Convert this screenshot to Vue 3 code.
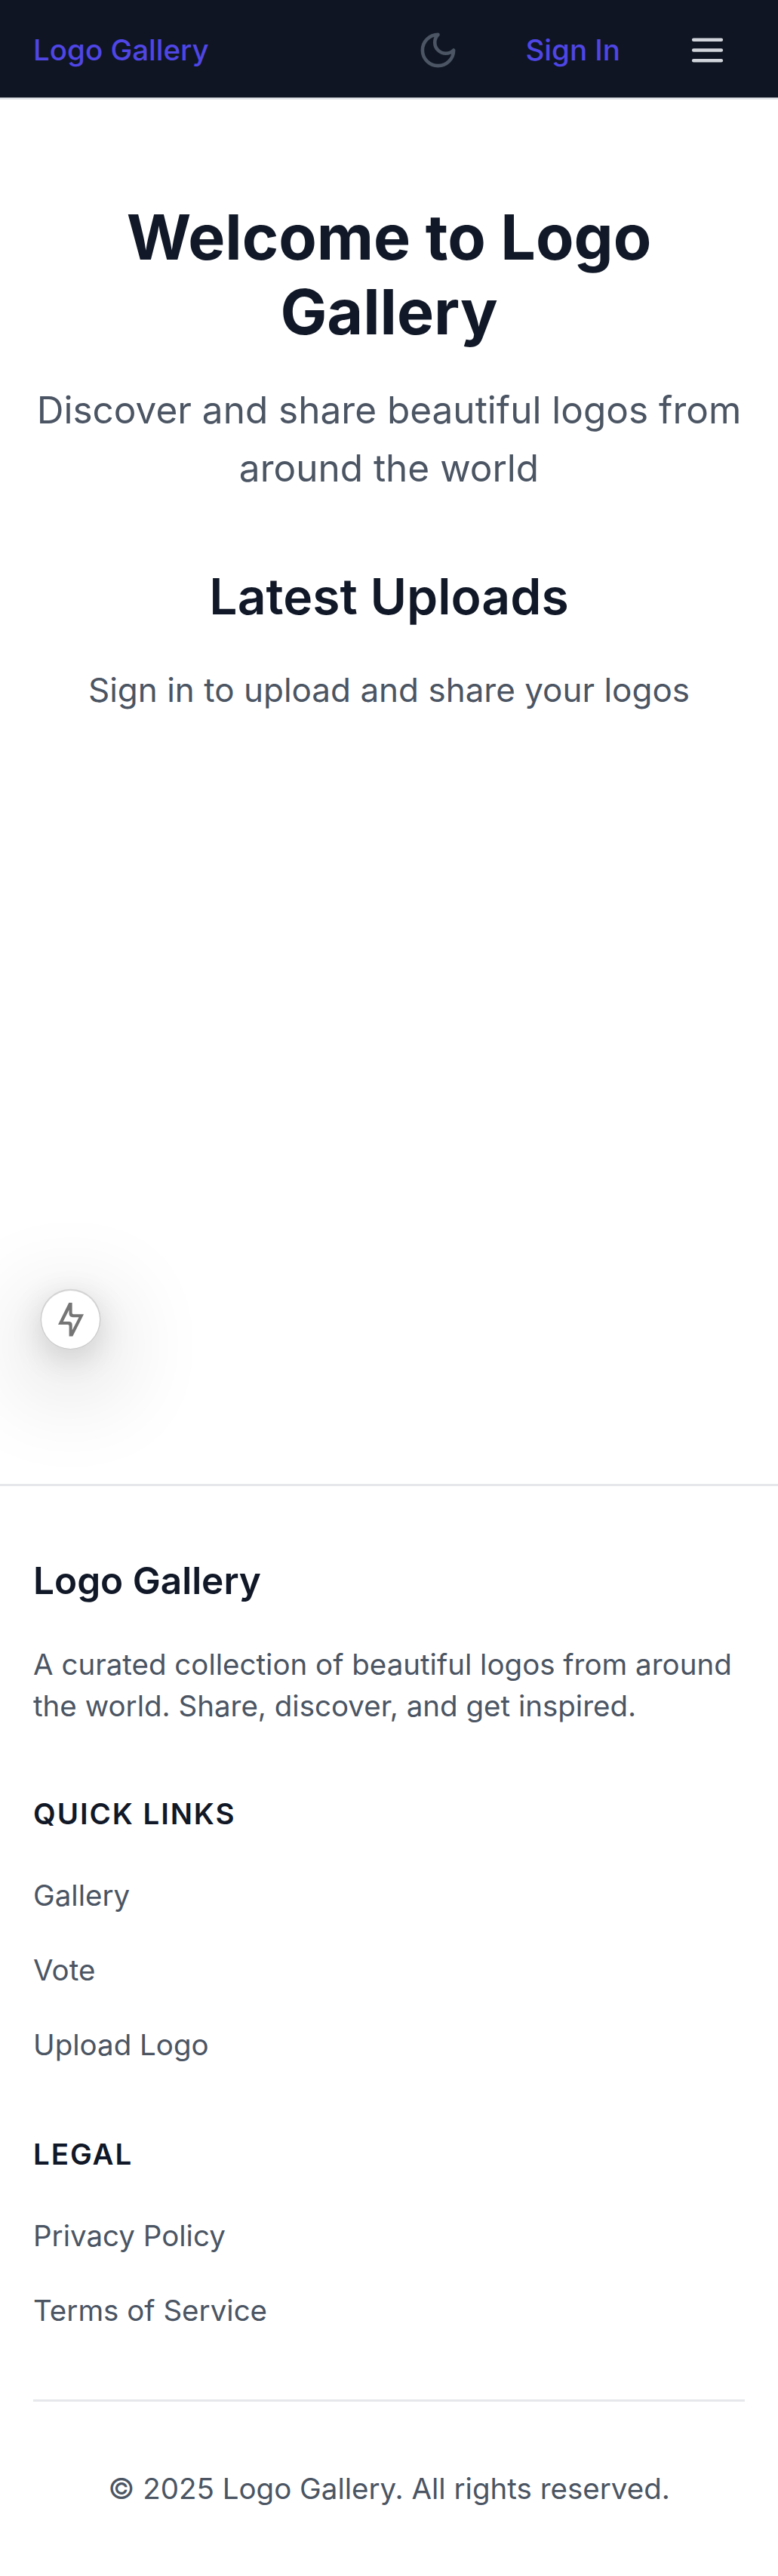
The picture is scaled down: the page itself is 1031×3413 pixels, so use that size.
<script setup>
const quickLinks = ['Gallery', 'Vote', 'Upload Logo']
const legalLinks = ['Privacy Policy', 'Terms of Service']
</script>

<template>
  <div class="page">
    <header class="header">
      <a class="brand">Logo Gallery</a>
      <nav class="actions">
        <button class="icon-button moon" aria-label="Toggle theme">
          <svg viewBox="0 0 24 24"><path d="M12 3a6 6 0 0 0 9 9 9 9 0 1 1-9-9Z" /></svg>
        </button>
        <a class="sign-in">Sign In</a>
        <button class="icon-button menu" aria-label="Open menu">
          <svg viewBox="0 0 24 24"><path d="M4 6h16M4 12h16M4 18h16" /></svg>
        </button>
      </nav>
    </header>

    <main class="main">
      <h1>Welcome to Logo Gallery</h1>
      <p class="lead">Discover and share beautiful logos from around the world</p>
      <h2>Latest Uploads</h2>
      <p class="hint">Sign in to upload and share your logos</p>
    </main>

    <footer class="footer">
      <h3>Logo Gallery</h3>
      <p class="about">A curated collection of beautiful logos from around the world. Share, discover, and get inspired.</p>
      <h4>Quick Links</h4>
      <ul>
        <li v-for="link in quickLinks" :key="link"><a>{{ link }}</a></li>
      </ul>
      <h4>Legal</h4>
      <ul>
        <li v-for="link in legalLinks" :key="link"><a>{{ link }}</a></li>
      </ul>
      <p class="copyright">© 2025 Logo Gallery. All rights reserved.</p>
    </footer>

    <button class="toolbar" aria-label="Open toolbar">
      <svg viewBox="0 0 34 44.6">
        <path fill-rule="evenodd" d="M14.3 0H18.6V13.4Q18.6 15.2 20.4 15.2H34L19.3 44.6H14.6V30.8Q14.6 29 12.8 29H0ZM6.7 25 14.5 9.5V14Q14.5 19.2 19.5 19.2H27.5L18.7 36.5V29.5Q18.7 25 14 25Z" />
      </svg>
    </button>
  </div>
</template>

<style>
html {
  font-size: 44px;
}
body {
  margin: 0;
  background: #fff;
}
</style>

<style scoped>
.page {
  position: relative;
  height: 3413px;
  overflow: hidden;
  display: flex;
  flex-direction: column;
  font-family: Inter, sans-serif;
  font-size: 1rem;
  line-height: 1.5;
  color: #4b5563;
}
h1, h2, h3, h4, p, ul {
  margin: 0;
  padding: 0;
}
.header {
  box-sizing: border-box;
  height: 3rem;
  flex: none;
  display: flex;
  align-items: center;
  justify-content: space-between;
  padding: 0 1rem;
  background: #0f1523;
  box-shadow: inset 0 -2.75px #e5e7eb;
}
.brand, .sign-in {
  font-size: 0.875rem;
  line-height: 1.25rem;
  font-weight: 500;
  color: #4f46e5;
}
.actions {
  display: flex;
  align-items: center;
  gap: 0.5rem;
}
.sign-in {
  padding: 0 1rem;
}
.icon-button {
  display: flex;
  padding: 0.5rem;
  border: 0;
  background: none;
}
.icon-button svg {
  width: 1.25rem;
  height: 1.25rem;
  fill: none;
  stroke: currentColor;
  stroke-width: 2;
  stroke-linecap: round;
  stroke-linejoin: round;
}
.moon {
  color: #4b5563;
}
.menu {
  color: #d1d5db;
}
.main {
  flex: none;
  box-sizing: border-box;
  height: 1834px;
  padding: 132.5px 1rem 0;
  text-align: center;
}
h1 {
  font-size: 1.875rem;
  line-height: 2.25rem;
  font-weight: 700;
  color: #111827;
}
.lead {
  margin-top: 42px;
  font-size: 1.125rem;
  line-height: 1.75rem;
}
h2 {
  margin-top: 87.5px;
  font-size: 1.5rem;
  line-height: 2rem;
  font-weight: 600;
  color: #111827;
}
.hint {
  margin-top: 47px;
}
.footer {
  border-top: 3px solid #e5e7eb;
  padding: 86.5px 1rem 0;
}
h3 {
  font-size: 1.125rem;
  line-height: 1.75rem;
  font-weight: 600;
  color: #111827;
}
.about {
  margin-top: 45px;
  font-size: 0.875rem;
  line-height: 1.25rem;
}
h4 {
  margin-top: 2rem;
  font-size: 0.875rem;
  line-height: 1.25rem;
  font-weight: 600;
  letter-spacing: 0.05em;
  text-transform: uppercase;
  color: #111827;
}
ul + h4 {
  margin-top: 86.5px;
}
ul {
  margin-top: 45.5px;
  display: flex;
  flex-direction: column;
  gap: 0.75rem;
  list-style: none;
}
li {
  height: 1.5rem;
}
li a {
  font-size: 0.875rem;
}
.copyright {
  margin-top: 87px;
  border-top: 3px solid #e5e7eb;
  padding-top: 87.5px;
  font-size: 0.875rem;
  line-height: 1.25rem;
  text-align: center;
}
.toolbar {
  position: absolute;
  left: 55px;
  top: 1710px;
  width: 77px;
  height: 77px;
  padding: 0;
  display: flex;
  align-items: center;
  justify-content: center;
  border: 0;
  border-radius: 50%;
  background: #fff;
  box-shadow:
    0 -0.7px 0 1.5px rgba(0, 0, 0, 0.1),
    0 11px 44px rgba(0, 0, 0, 0.16),
    0 33px 132px 11px rgba(0, 0, 0, 0.24);
}
.toolbar svg {
  width: 34px;
  height: 44.6px;
  fill: #757575;
}
</style>
